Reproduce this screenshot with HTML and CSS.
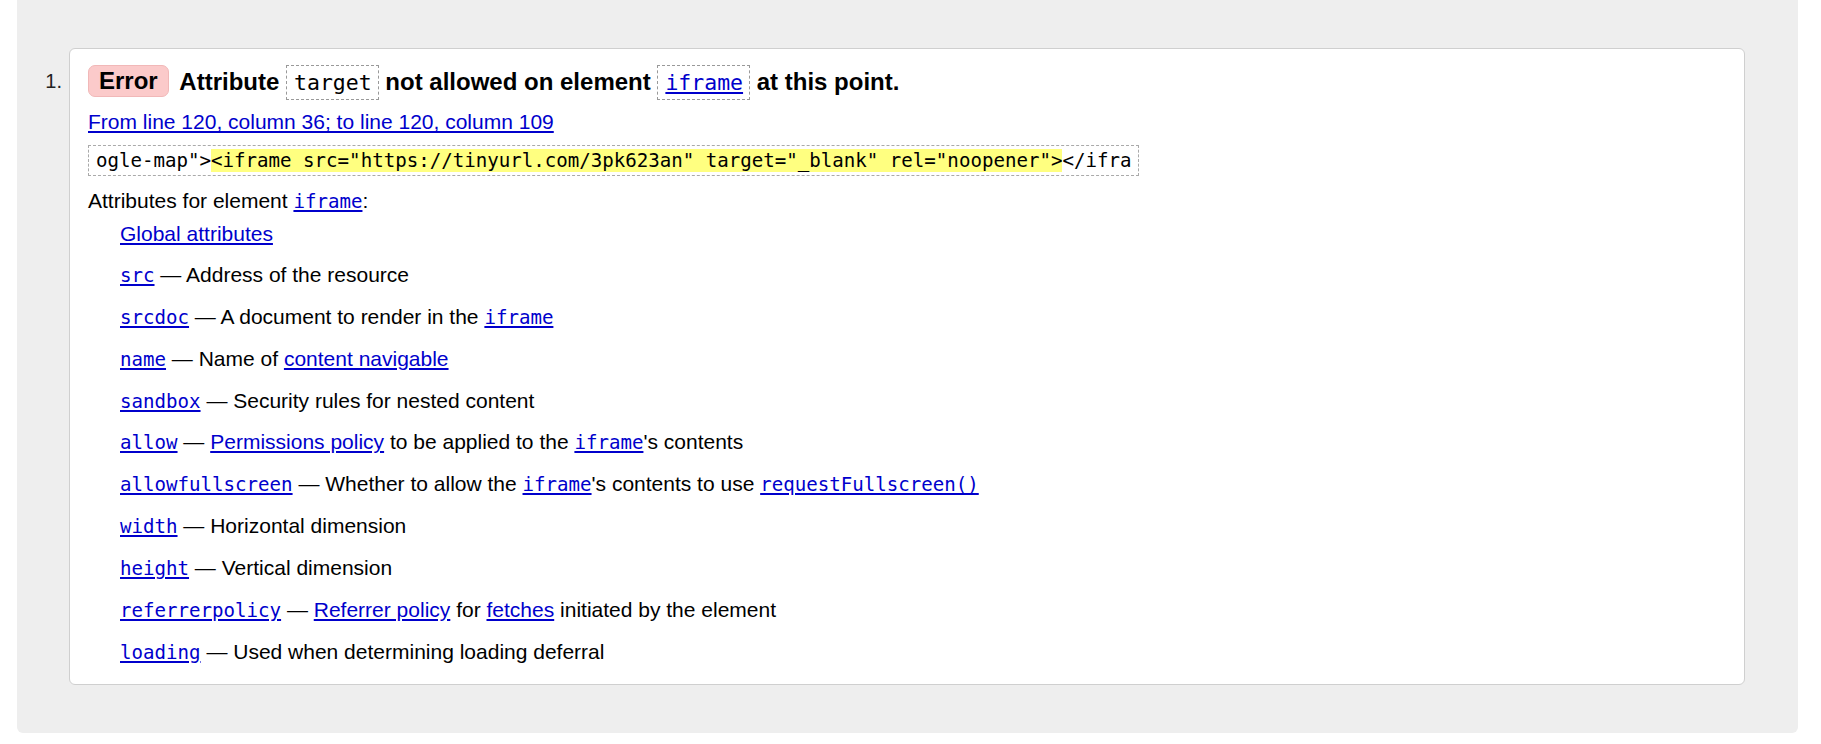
FILE: index.html
```html
<!DOCTYPE html>
<html lang="en">
<head>
<meta charset="utf-8">
<title>Validator message</title>
<link rel="stylesheet" href="styles.css">
</head>
<body>
<div class="page">
  <ol class="messages">
    <li class="item">
      <span class="num">1.</span>
      <div class="card">
        <p class="msg"><strong class="badge">Error</strong> <span class="msgtext">Attribute <code class="hcode">target</code> not allowed on element <code class="hcode"><a href="#">iframe</a></code> at this point.</span></p>
        <p class="loc"><a href="#">From line 120, column 36; to line 120, column 109</a></p>
        <p class="extract"><code>ogle-map"&gt;<b class="hl">&lt;iframe src="https://tinyurl.com/3pk623an" target="_blank" rel="noopener"&gt;</b>&lt;/ifra</code></p>
        <dl class="attrs">
          <dt>Attributes for element <a href="#"><code>iframe</code></a>:</dt>
          <dd class="global"><a href="#">Global attributes</a></dd>
          <dd><a href="#"><code>src</code></a> — Address of the resource</dd>
          <dd><a href="#"><code>srcdoc</code></a> — A document to render in the <a href="#"><code>iframe</code></a></dd>
          <dd><a href="#"><code>name</code></a> — Name of <a href="#">content navigable</a></dd>
          <dd><a href="#"><code>sandbox</code></a> — Security rules for nested content</dd>
          <dd><a href="#"><code>allow</code></a> — <a href="#">Permissions policy</a> to be applied to the <a href="#"><code>iframe</code></a>'s contents</dd>
          <dd><a href="#"><code>allowfullscreen</code></a> — Whether to allow the <a href="#"><code>iframe</code></a>'s contents to use <a href="#"><code>requestFullscreen()</code></a></dd>
          <dd><a href="#"><code>width</code></a> — Horizontal dimension</dd>
          <dd><a href="#"><code>height</code></a> — Vertical dimension</dd>
          <dd><a href="#"><code>referrerpolicy</code></a> — <a href="#">Referrer policy</a> for <a href="#">fetches</a> initiated by the element</dd>
          <dd><a href="#"><code>loading</code></a> — Used when determining loading deferral</dd>
        </dl>
      </div>
    </li>
  </ol>
</div>
</body>
</html>
```

FILE: styles.css
```css
html, body {
  margin: 0;
  padding: 0;
  background: #ffffff;
}

body {
  font-family: "Liberation Sans", Arial, sans-serif;
  font-size: 21px;
  color: #000000;
}

.page {
  margin: 0 23px 0 17px;
  padding: 48px 53px 48px 0;
  background: #eeeeee;
  border-radius: 0 0 6px 6px;
}

.messages {
  list-style: none;
  margin: 0;
  padding: 0;
}

.item {
  display: flex;
  align-items: flex-start;
}

.num {
  flex: 0 0 52px;
  box-sizing: border-box;
  padding-right: 7px;
  padding-top: 21px;
  text-align: right;
  line-height: 24px;
  font-size: 20px;
  color: #222222;
}

.card {
  flex: 1 1 auto;
  background: #ffffff;
  border: 1px solid #cfcfcf;
  border-radius: 6px;
  padding: 14px 18px 20px 18px;
}

a {
  color: #0000cc;
  text-decoration: underline;
}

code {
  font-family: "DejaVu Sans Mono", "Liberation Mono", monospace;
  font-size: 19.13px;
}

.msg {
  margin: 0;
  line-height: 36px;
  font-weight: bold;
  font-size: 24px;
}

.badge {
  display: inline-block;
  line-height: 30px;
  padding: 0 10px;
  background: #fbcaca;
  border: 1px solid #f1b8b8;
  border-radius: 7px;
  margin-right: 4px;
  vertical-align: middle;
  position: relative;
  top: -2px;
}

.msgtext {
  vertical-align: middle;
}

.hcode {
  display: inline-block;
  font-weight: normal;
  font-size: 21.5px;
  line-height: 27px;
  padding: 3px 6px 3px 7px;
  border: 1px dashed #999999;
  vertical-align: middle;
  position: relative;
  top: -1px;
}

.loc {
  margin: 9px 0 0 0;
  line-height: 24px;
}

.extract {
  margin: 11px 0 0 0;
  line-height: 24px;
}

.extract code {
  display: inline-block;
  line-height: 23px;
  padding: 3px 7px;
  border: 1px dashed #aaaaaa;
  color: #000000;
}

.hl {
  font-weight: normal;
  background: #ffff80;
}

.attrs {
  margin: 13px 0 0 0;
  display: flex;
  flex-direction: column;
  row-gap: 17.9px;
}

.attrs dt {
  height: 24px;
  line-height: 24px;
  margin-bottom: -9px;
}

.attrs dd {
  height: 24px;
  margin: 0 0 0 32px;
  line-height: 24px;
}

.attrs dd.global {
  margin-bottom: -1.2px;
}
```
